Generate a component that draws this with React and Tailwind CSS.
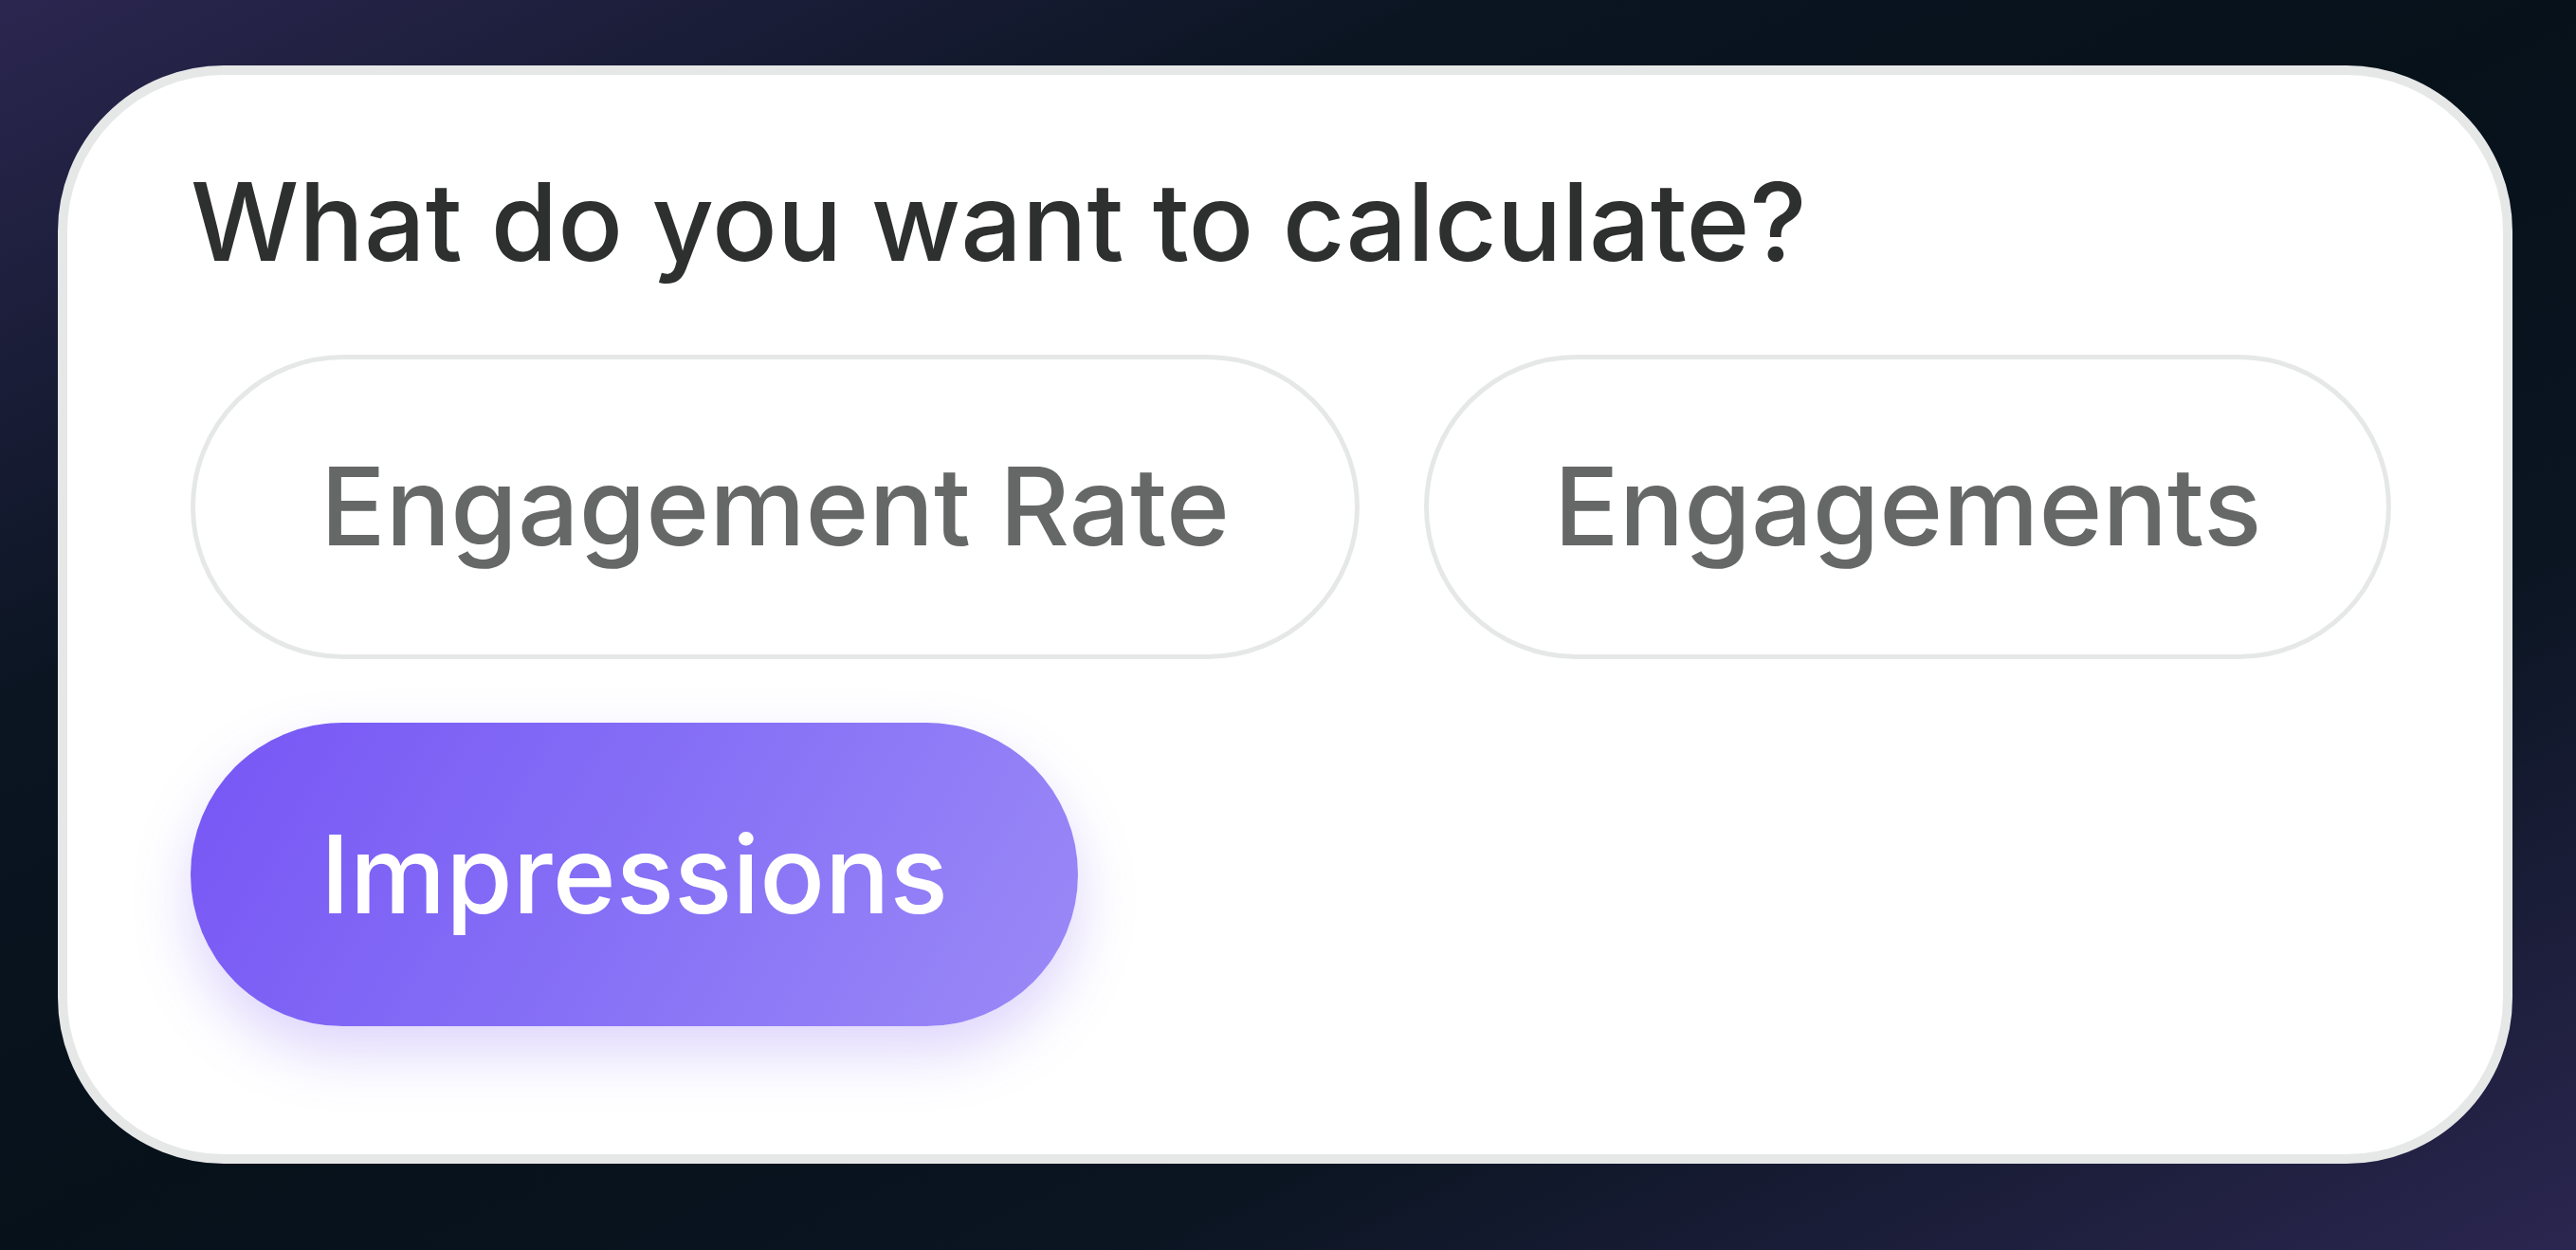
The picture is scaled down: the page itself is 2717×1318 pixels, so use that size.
import React from 'react';

const options = ['Engagement Rate', 'Engagements', 'Impressions'];

const App = () => {
    const selected = 'Impressions';

    return (
        /* Full page backdrop with the diagonal purple/black wash */
        <div className="h-[1318px] w-full overflow-hidden pl-[61px] pt-[69px] font-[Inter,sans-serif] bg-[linear-gradient(to_bottom_right,#2b2650_0%,#0b1522_28%,#06111a_50%,#0b1522_72%,#2b2650_100%)]">

            {/* The card */}
            <div className="w-[2589px] rounded-[175px] border-[10px] border-[#e6e8e8] bg-white pl-[130px] pr-[70px] pt-[87px] pb-[135px]">
                <h2 className="mb-[71px] text-[114px] leading-[1.2] font-[450] text-[#2e3030]">
                    What do you want to calculate?
                </h2>

                <div className="flex flex-wrap gap-x-[68px] gap-y-[67px]">
                    {options.map((label) =>
                        label === selected ? (
                            <button
                                key={label}
                                className="rounded-full px-[137px] py-[92px] text-[114px] leading-[1.2] font-medium text-white bg-[linear-gradient(120deg,#7756f5_0%,#8670f6_50%,#9b8af7_100%)] shadow-[0_28px_60px_rgba(124,92,245,0.25)]"
                            >
                                {label}
                            </button>
                        ) : (
                            <button
                                key={label}
                                className="rounded-full border-[5px] border-[#e6e8e8] bg-white px-[132px] py-[87px] text-[114px] leading-[1.2] font-medium text-[#666867]"
                            >
                                {label}
                            </button>
                        )
                    )}
                </div>
            </div>
        </div>
    );
};

export default App;
